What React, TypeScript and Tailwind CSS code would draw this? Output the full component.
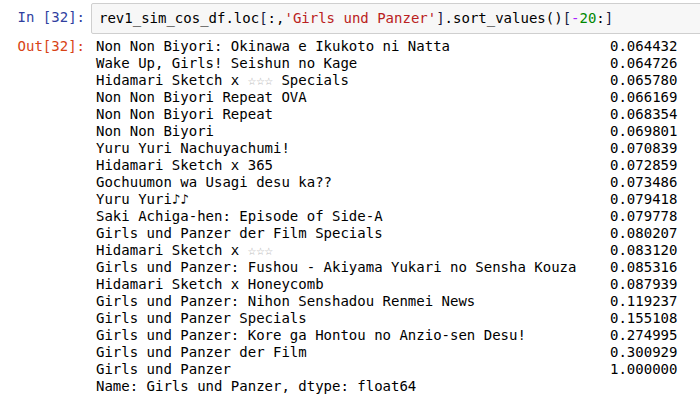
import React from "react";

const rows: [string, string][] = [
  ["Non Non Biyori: Okinawa e Ikukoto ni Natta", "0.064432"],
  ["Wake Up, Girls! Seishun no Kage", "0.064726"],
  ["Hidamari Sketch x ☆☆☆ Specials", "0.065780"],
  ["Non Non Biyori Repeat OVA", "0.066169"],
  ["Non Non Biyori Repeat", "0.068354"],
  ["Non Non Biyori", "0.069801"],
  ["Yuru Yuri Nachuyachumi!", "0.070839"],
  ["Hidamari Sketch x 365", "0.072859"],
  ["Gochuumon wa Usagi desu ka??", "0.073486"],
  ["Yuru Yuri♪♪", "0.079418"],
  ["Saki Achiga-hen: Episode of Side-A", "0.079778"],
  ["Girls und Panzer der Film Specials", "0.080207"],
  ["Hidamari Sketch x ☆☆☆", "0.083120"],
  ["Girls und Panzer: Fushou - Akiyama Yukari no Sensha Kouza", "0.085316"],
  ["Hidamari Sketch x Honeycomb", "0.087939"],
  ["Girls und Panzer: Nihon Senshadou Renmei News", "0.119237"],
  ["Girls und Panzer Specials", "0.155108"],
  ["Girls und Panzer: Kore ga Hontou no Anzio-sen Desu!", "0.274995"],
  ["Girls und Panzer der Film", "0.300929"],
  ["Girls und Panzer", "1.000000"],
];

function renderName(name: string) {
  const parts = name.split("☆☆☆");
  if (parts.length === 1) return name;
  return (
    <>
      {parts[0]}
      <span className="text-[#aaaaaa]">☆☆☆</span>
      {parts[1]}
    </>
  );
}

export default function App() {
  const mono = { fontFamily: '"DejaVu Sans Mono", monospace' };
  return (
    <div className="w-[700px] h-[400px] overflow-hidden bg-white pt-[3px]" style={mono}>
      <div className="flex items-start">
        <div className="w-[91px] shrink-0 pr-[6px] pt-[6px] text-right text-[14px] leading-[17px] text-[#303f9f]">
          In&nbsp;[32]:
        </div>
        <div className="flex-1 -mr-[30px] border border-[#cfcfcf] bg-[#f7f7f7] rounded-[2px] px-[7px] py-[6px] text-[14px] leading-[17px] text-black whitespace-pre">
          rev1_sim_cos_df.loc<span className="text-[#1a1a40]">[</span>:,
          <span className="text-[#ba2121]">'Girls und Panzer'</span>
          <span className="text-[#1a1a40]">]</span>.sort_values()
          <span className="text-[#1a1a40]">[</span>
          <span className="text-[#aa22ff]">-</span>
          <span className="text-[#008800]">20</span>:
          <span className="text-[#1a1a40]">]</span>
        </div>
      </div>
      <div className="flex items-start mt-[4px]">
        <div className="w-[91px] shrink-0 pr-[6px] text-right text-[14px] leading-[17px] text-[#d84315]">
          Out[32]:
        </div>
        <div className="pl-[5px] text-[14px] leading-[17px] text-black">
          {rows.map(([n, v], i) => (
            <div key={i} className="flex whitespace-pre">
              <span className="w-[514px]">{renderName(n)}</span>
              <span>{v}</span>
            </div>
          ))}
          <div className="whitespace-pre">Name: Girls und Panzer, dtype: float64</div>
        </div>
      </div>
    </div>
  );
}
